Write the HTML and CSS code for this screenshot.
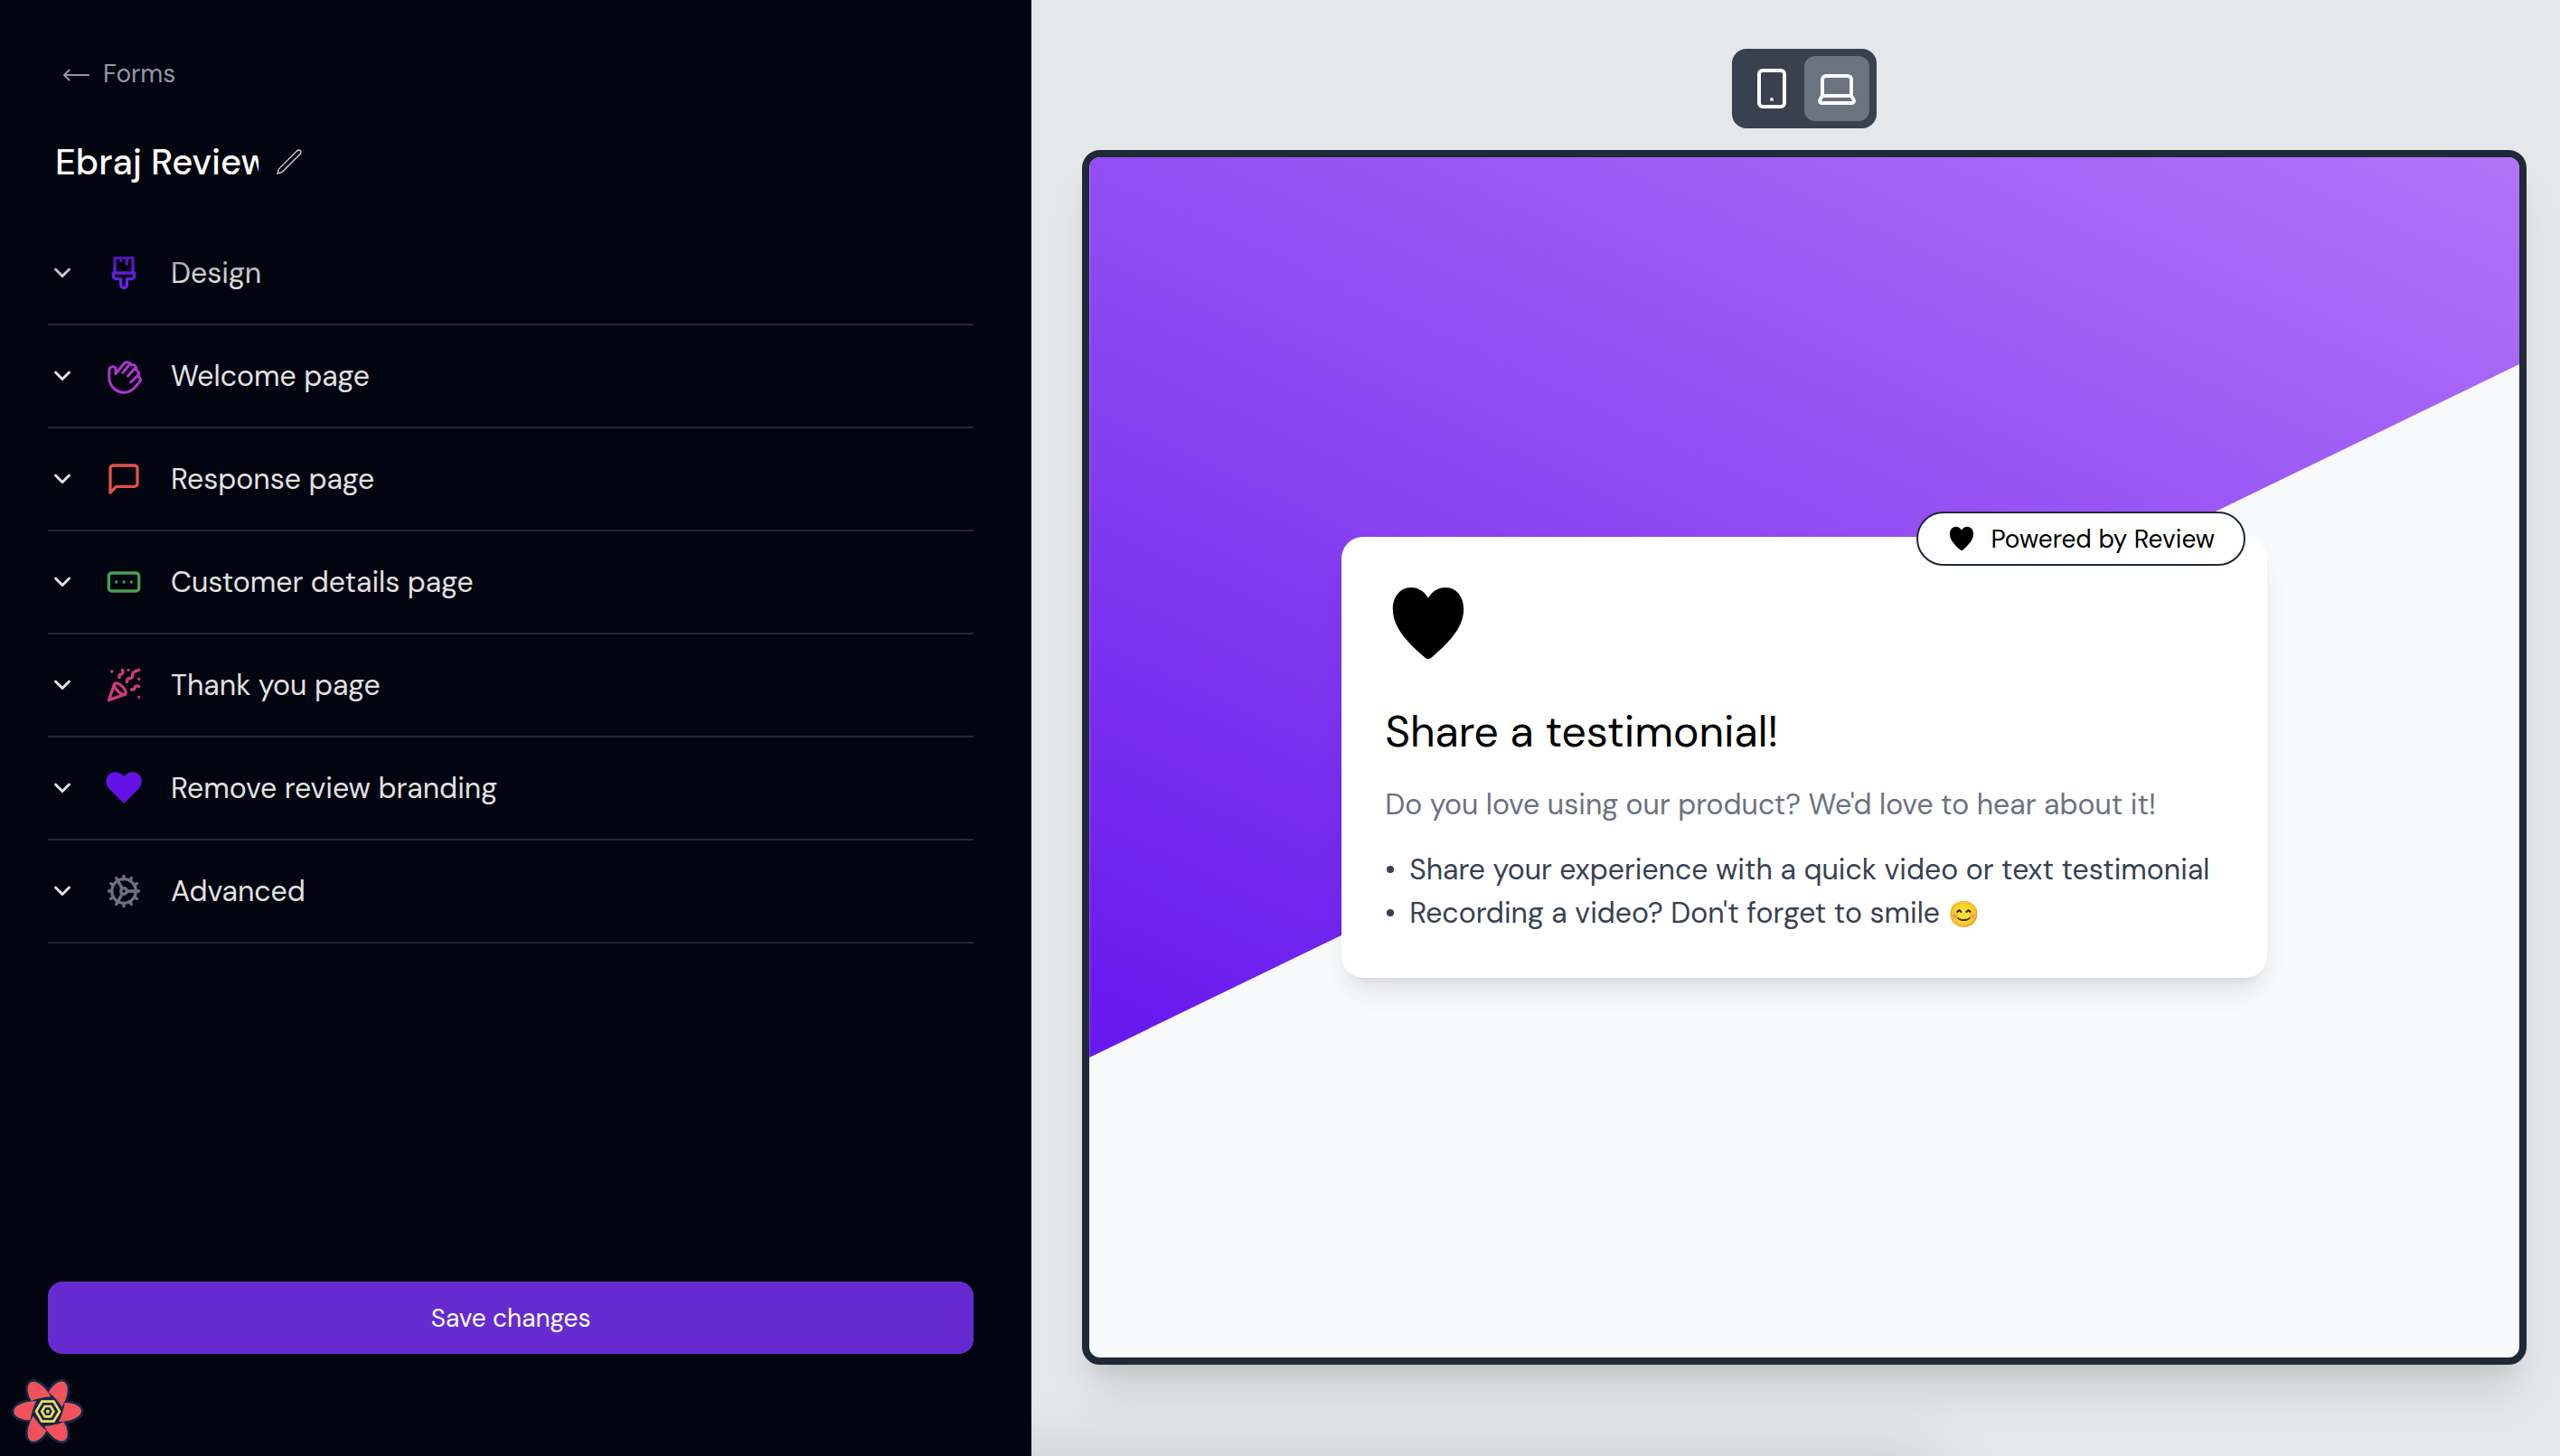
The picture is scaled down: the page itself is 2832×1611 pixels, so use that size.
FILE: index.html
```
<!DOCTYPE html>
<html lang="en">
<head>
<meta charset="utf-8">
<title>Ebraj Review</title>
<link rel="stylesheet" href="styles.css">
</head>
<body>
<svg class="sprite" aria-hidden="true">
  <symbol id="chevron" viewBox="0 0 32 32"><path d="M8.5 12l7.5 7.5 7.5-7.5"/></symbol>
  <symbol id="heart" viewBox="0 0 24 24"><path d="M12 4.9C13.2 3 14.8 2 16.7 2c3.3 0 5.1 2.8 5.1 6 0 5.5-5 10-8.8 13.3-.6.6-1.4.6-2 0C7.2 18 2.2 13.5 2.2 8c0-3.2 1.8-6 5.1-6 1.900 0 3.500 1 4.700 2.900Z"/></symbol>
</svg>
<div class="layout">
  <aside class="sidebar">
    <a class="back" href="#forms">
      <svg viewBox="0 0 32 32"><path d="M30 17H3M8.500 11.500 3 17l5.500 5.500"/></svg>
      Forms
    </a>
    <div class="title">
      <input class="title-input" type="text" value="Ebraj Review" aria-label="Form name">
      <button class="title-edit" type="button" aria-label="Edit name">
        <svg viewBox="0 0 24 24"><path d="m16.862 4.487 1.687-1.688a1.875 1.875 0 1 1 2.652 2.652L6.832 19.820a4.500 4.500 0 0 1-1.897 1.130l-2.685.8.8-2.685a4.500 4.500 0 0 1 1.130-1.897L16.863 4.487Z"/></svg>
      </button>
    </div>
    <nav class="sections">
      <button class="section" type="button">
        <svg class="chevron"><use href="#chevron"/></svg>
        <svg class="icon design" viewBox="0 0 24 24"><path d="M14 19.900V16h3a2 2 0 0 0 2-2v-2H5v2c0 1.100.9 2 2 2h3v3.900a2 2 0 1 0 4 0Z"/><path d="M6 12V2h12v10M14 2v4M10 2v2"/></svg>
        <span>Design</span>
      </button>
      <button class="section" type="button">
        <svg class="chevron"><use href="#chevron"/></svg>
        <svg class="icon welcome" viewBox="0 0 40 40"><path d="M11 17.500V12.500C11 8.500 3.700 9 3.700 14v7C3.700 31 11 38.300 20.300 38.300c5 0 8.500-2 11.700-5.500l5.300-6c2-2.300 1.200-5-1.300-6.500 1.300-2.800.5-5.500-2.300-6.800.8-3.500-1.700-6.500-5.400-5.800C26.500 4.300 22.500 3.500 20 6.500L11 17.500M25.300 8.500 19 16.300M32.300 11.500 24.500 20M35.500 19.500 27.500 27"/></svg>
        <span>Welcome page</span>
      </button>
      <button class="section" type="button">
        <svg class="chevron"><use href="#chevron"/></svg>
        <svg class="icon response" viewBox="0 0 24 24"><path d="M21 15a2 2 0 0 1-2 2H7l-4 4V5a2 2 0 0 1 2-2h14a2 2 0 0 1 2 2z"/></svg>
        <span>Response page</span>
      </button>
      <button class="section" type="button">
        <svg class="chevron"><use href="#chevron"/></svg>
        <svg class="icon customer" viewBox="0 0 24 24"><rect width="20" height="12" x="2" y="6" rx="2"/><path d="M12 12h.01M17 12h.01M7 12h.01"/></svg>
        <span>Customer details page</span>
      </button>
      <button class="section" type="button">
        <svg class="chevron"><use href="#chevron"/></svg>
        <svg class="icon thanks" viewBox="0 0 24 24"><path d="M5.800 11.300 2 22l10.700-3.790M4 3h.01M22 8h.01M15 2h.01M22 20h.01"/><path d="m22 2-2.240.75a2.900 2.900 0 0 0-1.960 3.120c.1.860-.57 1.630-1.450 1.630h-.38c-.86 0-1.600.6-1.760 1.440L14 10M22 13l-.82-.33c-.86-.34-1.820.2-1.980 1.110-.11.700-.72 1.220-1.430 1.220H17M11 2l.33.820c.34.860-.2 1.820-1.110 1.980C9.520 4.900 9 5.520 9 6.230V7"/><path d="M11 13c1.930 1.930 2.830 4.170 2 5-.83.830-3.070-.07-5-2-1.930-1.930-2.830-4.170-2-5 .83-.83 3.070.07 5 2Z"/></svg>
        <span>Thank you page</span>
      </button>
      <button class="section" type="button">
        <svg class="chevron"><use href="#chevron"/></svg>
        <svg class="icon branding" viewBox="0 0 40 40"><path d="M20 37 3 20C-1 15.500-.5 8 4 4.500 8.500 1 15.500 1.500 20 7c4.500-5.500 11.500-6 16-2.500 4.500 3.500 5 11 1 15.500Z"/></svg>
        <span>Remove review branding</span>
      </button>
      <button class="section" type="button">
        <svg class="chevron"><use href="#chevron"/></svg>
        <svg class="icon advanced" viewBox="0 0 24 24"><circle cx="12" cy="12" r="8"/><circle cx="12" cy="12" r="2"/><path d="M12 2v2M12 22v-2M17 20.660l-1-1.730M11 10.270 7 3.340M20.660 17l-1.730-1M3.340 7l1.730 1M14 12h8M2 12h2M20.660 7l-1.730 1M3.340 17l1.730-1M17 3.340l-1 1.730M11 13.730l-4 6.930"/></svg>
        <span>Advanced</span>
      </button>
    </nav>
    <button class="save" type="button">Save changes</button>
  </aside>

  <main class="preview">
    <div class="devices">
      <button class="device" type="button" aria-label="Mobile preview">
        <svg viewBox="0 0 48 48"><rect x="10" y="4" width="28" height="40" rx="4"/><path d="M24 36v.01"/></svg>
      </button>
      <button class="device active" type="button" aria-label="Desktop preview">
        <svg viewBox="0 0 48 48"><path d="M8 32V14a4 4 0 0 1 4-4h24a4 4 0 0 1 4 4v18M8 32h32l2.800 4.800A2.200 2.200 0 0 1 41 40H7a2.200 2.200 0 0 1-1.800-3.200Z"/></svg>
      </button>
    </div>
    <div class="frame">
      <div class="slope"></div>
      <article class="card">
        <a class="powered" href="#review"><svg><use href="#heart"/></svg>Powered by Review</a>
        <svg class="logo"><use href="#heart"/></svg>
        <h1>Share a testimonial!</h1>
        <p>Do you love using our product? We'd love to hear about it!</p>
        <ul>
          <li>Share your experience with a quick video or text testimonial</li>
          <li><span>Recording a video? Don't forget to smile <span class="emoji">😊</span></span></li>
        </ul>
      </article>
    </div>
  </main>
</div>

<button class="devtools" type="button" aria-label="Open query devtools">
  <svg viewBox="0 0 330 303">
    <defs><path id="petal" d="M121 121C86 120 46 134 46 156c0 17 28 29 55 28 4-24 10-44 20-63Z"/></defs>
    <g fill="#0b2a4a" stroke="#0b2a4a" stroke-width="16" stroke-linejoin="round">
      <circle cx="158" cy="155" r="48"/>
      <use href="#petal"/><use href="#petal" transform="rotate(60 158 155)"/><use href="#petal" transform="rotate(120 158 155)"/><use href="#petal" transform="rotate(180 158 155)"/><use href="#petal" transform="rotate(240 158 155)"/><use href="#petal" transform="rotate(300 158 155)"/>
    </g>
    <g fill="#ef525b">
      <use href="#petal"/><use href="#petal" transform="rotate(60 158 155)"/><use href="#petal" transform="rotate(120 158 155)"/><use href="#petal" transform="rotate(180 158 155)"/><use href="#petal" transform="rotate(240 158 155)"/><use href="#petal" transform="rotate(300 158 155)"/>
    </g>
    <g fill="#0b2a4a" stroke="#ffd95e" stroke-width="8">
      <path d="M120 155l19-33h39l20 33-20 33h-39Z"/>
      <path d="M139 155l10-17h19l10 17-10 17h-19Z"/>
    </g>
    <circle cx="158.500" cy="155" r="6" fill="#ffd95e"/>
  </svg>
</button>
</body>
</html>
```
FILE: styles.css
```
* {
  box-sizing: border-box;
}

body {
  margin: 0;
  font-family: "DM Sans", Inter, sans-serif;
  background: #02040f;
}

button,
input {
  margin: 0;
  padding: 0;
  border: 0;
  background: none;
  color: inherit;
  font: inherit;
}

a {
  color: inherit;
  text-decoration: none;
}

svg {
  display: block;
  flex: none;
}

.sprite {
  position: absolute;
  width: 0;
  height: 0;
}

.layout {
  display: grid;
  grid-template-columns: minmax(0, 27fr) minmax(0, 40fr);
  min-height: 100vh;
}

/* Sidebar */

.sidebar {
  display: flex;
  flex-direction: column;
  padding: 61px 64px 113px 53px;
  color: #e2e2e2;
}

.back {
  display: flex;
  align-items: center;
  align-self: flex-start;
  gap: 14px;
  margin-bottom: 48px;
  padding-left: 15px;
  font-size: 28px;
  line-height: 42px;
  color: #9298a5;
}

.back svg {
  width: 32px;
  height: 32px;
  fill: none;
  stroke: currentColor;
  stroke-width: 2;
  stroke-linecap: round;
}

.title {
  display: flex;
  align-items: center;
  gap: 10px;
  margin-bottom: 39px;
}

.title-input {
  width: 241px;
  height: 56px;
  padding: 0 8px;
  font-size: 40px;
  font-weight: 500;
  color: #fafafa;
}

.title-edit svg {
  width: 32px;
  height: 32px;
  fill: none;
  stroke: #d1d5db;
}

.sections {
  position: relative;
  display: flex;
  flex-direction: column;
  margin-bottom: 64px;
}

.sections::before {
  content: "";
  position: absolute;
  top: -28px;
  left: 0;
  right: 0;
  height: 96px;
  background: linear-gradient(#02040f, rgba(2, 4, 15, 0));
}

.section {
  display: flex;
  align-items: center;
  height: 114px;
  border-bottom: 2px solid #1f2937;
  font-size: 32px;
  line-height: 48px;
  text-align: left;
}

.chevron {
  width: 32px;
  height: 32px;
  margin-right: 32px;
  fill: none;
  stroke: #e2e2e2;
  stroke-width: 3;
  stroke-linecap: round;
  stroke-linejoin: round;
}

.icon {
  width: 40px;
  height: 40px;
  margin-right: 32px;
  overflow: visible;
  fill: none;
  stroke: currentColor;
  stroke-width: 2;
  stroke-linecap: round;
  stroke-linejoin: round;
}

.design { color: #6f1ff5; }
.welcome { color: #b135cf; stroke-width: 3; }
.response { color: #df5247; }
.customer { color: #489f50; }
.thanks { color: #cd3a76; }
.branding { fill: #6412e8; stroke: none; }
.advanced { color: #6b7280; }

.save {
  height: 80px;
  margin-top: auto;
  border-radius: 16px;
  background: #652bd0;
  color: #fff;
  font-size: 28px;
}

/* Preview */

.preview {
  position: relative;
  display: flex;
  flex-direction: column;
  align-items: center;
  gap: 24px;
  padding: 54px 37px 101px 56px;
  overflow: hidden;
  background: #e5e7eb;
}

.preview::after {
  content: "";
  position: absolute;
  top: 100%;
  left: -100px;
  width: 65%;
  height: 100px;
  box-shadow: 0 0 80px rgba(0, 0, 0, 0.12);
}

.devices {
  display: flex;
  padding: 8px;
  border-radius: 16px;
  background: #394150;
}

.device {
  display: grid;
  place-items: center;
  width: 72px;
  height: 72px;
  border-radius: 12px;
}

.device.active {
  background: #6b7280;
}

.device svg {
  width: 48px;
  height: 48px;
  fill: none;
  stroke: #f9fafb;
  stroke-width: 4;
  stroke-linecap: round;
  stroke-linejoin: round;
}

.frame {
  position: relative;
  display: grid;
  flex: 1;
  place-items: center;
  width: 100%;
  overflow: hidden;
  border: 8px solid #1f2937;
  border-radius: 20px;
  background: #f9fafc;
  box-shadow: 0 40px 50px -10px rgba(0, 0, 0, 0.1), 0 16px 20px -12px rgba(0, 0, 0, 0.1);
}

.slope {
  position: absolute;
  inset: 0 0 25%;
  background: linear-gradient(25deg, #6617ee, #8d47f2 50%, #b274f8);
  clip-path: polygon(0 0, 100% 0, 100% 23%, 0 100%);
}

.card {
  position: relative;
  width: 1024px;
  max-width: 90%;
  padding: 48px;
  border-radius: 24px;
  background: #fff;
  box-shadow: 0 20px 30px -6px rgba(0, 0, 0, 0.1), 0 8px 12px -8px rgba(0, 0, 0, 0.1);
}

.powered {
  position: absolute;
  top: -28px;
  right: 24px;
  display: flex;
  align-items: center;
  gap: 16px;
  height: 60px;
  padding: 0 32px;
  border: 2px solid #1f2937;
  border-radius: 30px;
  background: #fff;
  color: #000;
  font-size: 28px;
}

.powered svg {
  width: 32px;
  height: 32px;
}

.logo {
  width: 96px;
  height: 96px;
}

.card h1 {
  margin: 36px 0 20px;
  font-size: 48px;
  font-weight: 400;
  line-height: 72px;
  color: #000;
}

.card p {
  margin: 0 0 24px;
  font-size: 32px;
  line-height: 48px;
  color: #6b7280;
}

.card ul {
  margin: 0;
  padding: 0 0 0 2px;
  list-style: none;
}

.card li {
  display: flex;
  align-items: center;
  gap: 17px;
  font-size: 32px;
  line-height: 48px;
  color: #374151;
}

.card li::before {
  content: "";
  flex: none;
  width: 8px;
  height: 8px;
  border-radius: 50%;
  background: currentColor;
}

.emoji {
  font-size: 28px;
  line-height: 28px;
}

.devtools {
  position: fixed;
  left: 0;
  bottom: 0;
}

.devtools svg {
  width: 110px;
  height: 101px;
}
```
